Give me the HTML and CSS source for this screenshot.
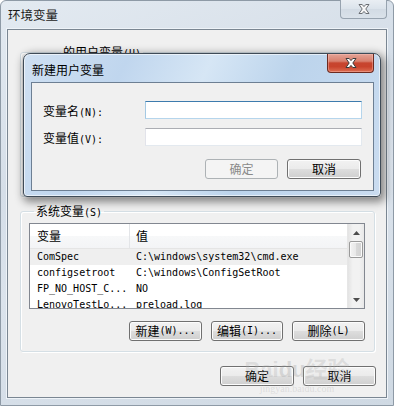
FILE: index.html
```html
<!DOCTYPE html>
<html lang="zh-CN">
<head>
<meta charset="utf-8">
<title>环境变量</title>
<link rel="stylesheet" href="styles.css">
</head>
<body>
<div class="win">
  <div class="titlebar">
    <span class="title">环境变量</span>
    <div class="close-btn inactive">
      <svg width="12" height="10" viewBox="0 0 12 10"><polygon points="1,0.5 4.2,0.5 6,2.6 7.8,0.5 11,0.5 7.8,5 11,9.5 7.8,9.5 6,7.4 4.2,9.5 1,9.5 4.2,5" fill="#f6f6f6" stroke="#6a6e73" stroke-width="1"/></svg>
    </div>
  </div>
  <div class="client">
    <fieldset class="group user">
      <legend class="user-legend">的用户变量<span class="mono">(U)</span></legend>
      <div class="user-space"></div>
    </fieldset>
    <fieldset class="group sys">
      <legend class="sys-legend">系统变量<span class="mono">(S)</span></legend>
      <div class="list">
        <div class="list-main">
          <div class="lrow header">
            <div class="c1">变量</div>
            <div class="c2">值</div>
          </div>
          <div class="lrow item hot"><div class="c1 mono">ComSpec</div><div class="c2 mono">C:\windows\system32\cmd.exe</div></div>
          <div class="lrow item"><div class="c1 mono">configsetroot</div><div class="c2 mono">C:\windows\ConfigSetRoot</div></div>
          <div class="lrow item"><div class="c1 mono">FP_NO_HOST_C...</div><div class="c2 mono">NO</div></div>
          <div class="lrow item"><div class="c1 mono">LenovoTestLo...</div><div class="c2 mono">preload.log</div></div>
        </div>
        <div class="vscroll">
          <div class="arrow up"><svg width="7" height="4" viewBox="0 0 7 4"><polygon points="0,4 3.5,0 7,4" fill="#4d4d4d"/></svg></div>
          <div class="thumb"></div>
          <div class="track"></div>
          <div class="arrow down"><svg width="7" height="4" viewBox="0 0 7 4"><polygon points="0,0 3.5,4 7,0" fill="#4d4d4d"/></svg></div>
        </div>
      </div>
      <div class="btnrow">
        <button class="btn">新建<span class="mono">(W)...</span></button>
        <button class="btn narrow">编辑<span class="mono">(I)...</span></button>
        <button class="btn">删除<span class="mono">(L)</span></button>
      </div>
    </fieldset>
    <div class="btnrow footer">
      <button class="btn wide">确定</button>
      <button class="btn">取消</button>
    </div>
  </div>

  <div class="watermark">
    <span class="wm-big">Bai<span class="wm-du">du</span>经验</span>
    <span class="wm-small">jingyan.baidu.com</span>
  </div>

  <div class="dialog">
    <div class="d-titlebar">
      <span class="d-title">新建用户变量</span>
      <div class="close-btn active">
        <svg width="12" height="10" viewBox="0 0 12 10"><polygon points="1,0.5 4.2,0.5 6,2.6 7.8,0.5 11,0.5 7.8,5 11,9.5 7.8,9.5 6,7.4 4.2,9.5 1,9.5 4.2,5" fill="#ffffff" stroke="#3b3b3b" stroke-width="1"/></svg>
      </div>
    </div>
    <div class="d-client">
      <div class="field">
        <label class="flabel">变量名<span class="mono">(N):</span></label>
        <div class="input focused"></div>
      </div>
      <div class="field second">
        <label class="flabel">变量值<span class="mono">(V):</span></label>
        <div class="input"></div>
      </div>
      <div class="btnrow d-buttons">
        <button class="btn disabled">确定</button>
        <button class="btn wide">取消</button>
      </div>
    </div>
  </div>
</div>
</body>
</html>
```

FILE: styles.css
```css
* { box-sizing: border-box; }
html, body { margin: 0; padding: 0; }
body {
  width: 394px;
  height: 406px;
  overflow: hidden;
  font-family: "Noto Sans CJK SC", "Noto Sans", sans-serif;
  font-size: 12px;
  color: #000;
}
.mono {
  font-family: "DejaVu Sans Mono", "Liberation Mono", monospace;
  font-size: 10px;
}

.win {
  position: relative;
  width: 394px;
  height: 406px;
  display: flex;
  flex-direction: column;
  background: linear-gradient(160deg, #e3eaf1 0%, #d5dee8 35%, #dbe3ec 55%, #cfd9e3 100%);
  border: 1px solid #8e9aa6;
  border-radius: 6px 6px 0 0;
}

.titlebar {
  height: 28px;
  display: flex;
  align-items: flex-start;
  flex: none;
}
.title {
  padding: 5px 0 0 7px;
  font-size: 12.5px;
  line-height: 17px;
  color: #1a1a1a;
}
.close-btn {
  margin-left: auto;
  height: 19px;
  width: 47px;
  display: flex;
  align-items: center;
  justify-content: center;
  border-radius: 0 0 4px 4px;
}
.close-btn.inactive {
  margin-right: 6px;
  margin-top: -1px;
  height: 19px;
  background: linear-gradient(#e9eef3, #dbe3eb 50%, #d2dbe4 51%, #dae2ea);
  border: 1px solid #97a3af;
  border-top: none;
}

.client {
  flex: 1;
  margin: 0 6px 7px 6px;
  background: #f0f0f0;
  border: 1px solid #7a8692;
  box-shadow: 0 0 0 1px #eef3f8;
  display: flex;
  flex-direction: column;
  padding: 0 11px 11px 12px;
}

.group {
  margin: 0;
  padding: 0;
  border: 1px solid #d5dfe5;
  border-radius: 3px;
  box-shadow: inset 1px 1px 0 #fff, 1px 1px 0 #fff;
}
.group legend {
  line-height: 16px;
  height: 16px;
  padding: 0 2px;
}
.user {
  margin-top: 14px;
}
.user-legend {
  margin-left: 40px;
}
.user-space {
  height: 136px;
}

.sys {
  margin-top: 6px;
  padding: 4px 9px 10px 8px;
}
.sys-legend {
  margin-left: 5px;
}

.list {
  height: 86px;
  border: 1px solid #828790;
  background: #fff;
  display: flex;
  overflow: hidden;
}
.list-main {
  flex: 1;
  overflow: hidden;
}
.lrow {
  display: flex;
  height: 16px;
  line-height: 16px;
  align-items: center;
  white-space: nowrap;
}
.lrow .c1 {
  width: 100px;
  padding-left: 7px;
  flex: none;
  overflow: hidden;
}
.lrow .c2 {
  padding-left: 6px;
  flex: 1;
  overflow: hidden;
}
.lrow.header {
  height: 25px;
  align-items: stretch;
  background: linear-gradient(#ffffff 0%, #ffffff 50%, #f7f8f9 51%, #f3f4f6 100%);
  border-bottom: 1px solid #e5e5e5;
}
.lrow.header .c1,
.lrow.header .c2 {
  display: flex;
  align-items: center;
  font-size: 12px;
}
.lrow.header .c1 {
  border-right: 1px solid #e3e5e8;
}
.lrow.item .c1,
.lrow.item .c2 {
  font-size: 10px;
  line-height: 16px;
  height: 16px;
}
.lrow.hot {
  background: #efefef;
}

.vscroll {
  width: 17px;
  flex: none;
  display: flex;
  flex-direction: column;
  background: linear-gradient(90deg, #e3e3e3, #f2f2f2 30%, #f2f2f2 70%, #e8e8e8);
  border-left: 1px solid #e6e6e6;
}
.arrow {
  height: 17px;
  display: flex;
  align-items: center;
  justify-content: center;
  flex: none;
}
.thumb {
  height: 17px;
  margin: 0 1px;
  border: 1px solid #9a9a9a;
  border-radius: 2px;
  background: linear-gradient(90deg, #f3f3f3, #e8e8e8 50%, #d9d9d9 51%, #d2d2d2);
  box-shadow: inset 0 0 0 1px #fafafa;
  flex: none;
}
.track { flex: 1; }

.btnrow {
  display: flex;
  justify-content: flex-end;
  gap: 9px;
}
.sys .btnrow {
  margin-top: 12px;
}
.btn {
  font-family: "Noto Sans CJK SC", "Noto Sans", sans-serif;
  font-size: 12px;
  height: 20px;
  width: 73px;
  padding: 0;
  line-height: 16px;
  color: #000;
  border: 1px solid #707070;
  border-radius: 3px;
  background: linear-gradient(#f2f2f2 0%, #ebebeb 48%, #dddddd 52%, #cfcfcf 100%);
  box-shadow: inset 0 0 0 1px #fcfcfc;
  display: flex;
  align-items: center;
  justify-content: center;
}
.btn.narrow { width: 72px; }
.btn.wide { width: 74px; }
.btn.disabled {
  color: #8a8a8a;
  border-color: #adb2b5;
  background: #f4f4f4;
  box-shadow: none;
}
.footer {
  margin-top: 14px;
  margin-right: -1px;
}

/* watermark */
.watermark {
  position: absolute;
  left: 244px;
  top: 358px;
  width: 104px;
  display: flex;
  flex-direction: column;
  align-items: center;
  pointer-events: none;
  color: rgba(175, 175, 175, 0.3);
  line-height: 1;
  white-space: nowrap;
}
.wm-big {
  font-family: "Liberation Sans", "Noto Sans CJK SC", sans-serif;
  font-weight: bold;
  font-size: 22px;
}
.wm-du {
  color: rgba(150, 150, 150, 0.28);
}
.wm-small {
  font-family: "Liberation Serif", serif;
  font-size: 10px;
  margin-top: 3px;
}

/* dialog */
.dialog {
  position: absolute;
  left: 22px;
  top: 52px;
  width: 358px;
  height: 144px;
  display: flex;
  flex-direction: column;
  border: 1px solid #3f4b57;
  border-radius: 7px 7px 4px 4px;
  background: linear-gradient(115deg, #cfe0f2 0%, #c0d6ee 25%, #d6e6f5 45%, #bcd4ec 65%, #cadcf0 100%);
  box-shadow: 2px 3px 9px 2px rgba(0, 0, 0, 0.45), inset 0 0 0 1px rgba(255, 255, 255, 0.6);
}
.d-titlebar {
  height: 28px;
  display: flex;
  align-items: flex-start;
  flex: none;
}
.d-title {
  padding: 7px 0 0 8px;
  line-height: 17px;
  font-size: 12px;
}
.close-btn.active {
  margin-right: 6px;
  height: 19px;
  background: linear-gradient(#e4a396 0%, #d8806e 40%, #c7452f 50%, #c8432c 70%, #dc6d52 100%);
  border: 1px solid #6c2a20;
  border-top: none;
  box-shadow: inset 0 0 0 1px rgba(255, 200, 190, 0.4);
}
.d-client {
  flex: 1;
  margin: 0 6px 5px 7px;
  background: #f0f0f0;
  border: 1px solid #6d7f93;
  padding: 18px 11px 11px 11px;
  display: flex;
  flex-direction: column;
}
.field {
  display: flex;
  align-items: center;
  height: 18px;
}
.field.second {
  margin-top: 9px;
}
.flabel {
  width: 102px;
  flex: none;
}
.input {
  width: 218px;
  height: 18px;
  background: #fff;
  border: 1px solid #e3e9ef;
  border-top-color: #abadb3;
  border-left-color: #e2e3ea;
}
.input.focused {
  border-color: #b5d5ec;
  border-top-color: #3d7bad;
  border-left-color: #a4c9e3;
}
.d-buttons {
  margin-top: 13px;
  margin-right: 1px;
}
```
